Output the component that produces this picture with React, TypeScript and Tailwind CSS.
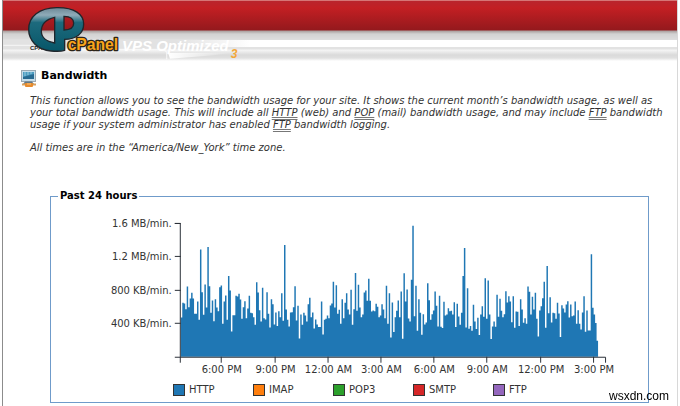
import React from 'react';

interface Series {
  name: string;
  swatch: string;
}

const SERIES: Series[] = [
  { name: 'HTTP', swatch: 'bg-[#1f77b4]' },
  { name: 'IMAP', swatch: 'bg-[#ff7f0e]' },
  { name: 'POP3', swatch: 'bg-[#2ca02c]' },
  { name: 'SMTP', swatch: 'bg-[#d62728]' },
  { name: 'FTP', swatch: 'bg-[#9467bd]' },
];

// One sample per five minutes, in percent of 400 KB/min
const HTTP_SAMPLES = [
  118, 162, 160, 143, 211, 149, 175, 192, 175, 129, 129, 166, 111, 322, 194, 126, 217, 148, 330, 212,
  132, 169, 107, 173, 148, 137, 209, 214, 99, 166, 184, 111, 243, 199, 76, 125, 125, 183, 181, 189,
  172, 114, 149, 167, 116, 145, 183, 132, 131, 119, 96, 224, 193, 140, 106, 207, 116, 112, 194, 129,
  88, 173, 158, 97, 133, 92, 137, 119, 191, 108, 336, 142, 111, 91, 133, 134, 149, 212, 109, 153,
  55, 127, 96, 132, 124, 106, 158, 177, 119, 133, 85, 112, 97, 89, 89, 166, 67, 111, 114, 124,
  116, 154, 160, 225, 148, 215, 129, 141, 99, 173, 116, 162, 191, 142, 127, 201, 96, 143, 252, 138,
  216, 148, 119, 127, 193, 199, 168, 234, 168, 136, 139, 137, 159, 150, 119, 124, 158, 142, 116, 213,
  99, 191, 58, 163, 74, 119, 138, 169, 119, 196, 54, 251, 166, 202, 115, 106, 231, 394, 122, 213,
  78, 173, 132, 66, 128, 97, 103, 221, 170, 111, 128, 139, 196, 153, 91, 183, 90, 86, 165, 124,
  127, 146, 137, 138, 127, 164, 89, 159, 121, 96, 132, 243, 327, 88, 206, 84, 92, 78, 156, 106,
  83, 117, 65, 127, 152, 120, 236, 114, 229, 127, 53, 91, 106, 90, 186, 120, 174, 138, 119, 128,
  197, 163, 182, 166, 104, 182, 87, 136, 135, 92, 173, 142, 102, 116, 99, 211, 195, 127, 180, 142,
  192, 114, 61, 139, 152, 176, 225, 87, 273, 131, 179, 103, 132, 131, 114, 162, 130, 59, 155, 145,
  133, 157, 167, 118, 157, 122, 124, 166, 99, 140, 99, 82, 133, 182, 75, 139, 79, 79, 308, 147,
  127, 101, 48,
];

const Y_TICKS = [
  { y: 20, label: '1.6 MB/min.' },
  { y: 53, label: '1.2 MB/min.' },
  { y: 87, label: '800 KB/min.' },
  { y: 120, label: '400 KB/min.' },
];

const X_TICKS = [
  { x: 170, label: '6:00 PM' },
  { x: 224, label: '9:00 PM' },
  { x: 277, label: '12:00 AM' },
  { x: 330, label: '3:00 AM' },
  { x: 383, label: '6:00 AM' },
  { x: 436, label: '9:00 AM' },
  { x: 490, label: '12:00 PM' },
  { x: 543, label: '3:00 PM' },
];

const BASE_Y = 153;
const START_X = 130;
const STEP = 1.477;

const areaPath = () => {
  let d = `M${START_X} ${BASE_Y}`;
  HTTP_SAMPLES.forEach((value, i) => {
    const top = (BASE_Y - value / 3).toFixed(2);
    d += `V${top}H${(START_X + (i + 1) * STEP).toFixed(2)}`;
  });
  return `${d}V${BASE_Y}Z`;
};

const BandwidthChart: React.FC = () => (
  <svg
    viewBox="0 0 598 172"
    className="mt-[2px] block w-full text-[10px]"
    role="img"
    aria-label="Bandwidth usage, past 24 hours"
  >
    <path d={areaPath()} fill="#1f77b4" />
    <path d="M124 19.5H129.5V159M124 153.5H555.5V159" fill="none" stroke="#2a3038" />
    {Y_TICKS.map((tick) => (
      <g key={tick.label}>
        <path d={`M124 ${tick.y - 0.5}H130`} stroke="#2a3038" />
        <text x="121" y={tick.y + 3} textAnchor="end" fill="#333">
          {tick.label}
        </text>
      </g>
    ))}
    {X_TICKS.map((tick) => (
      <g key={tick.label}>
        <path d={`M${tick.x + 0.5} 153V159`} stroke="#2a3038" />
        <text x={tick.x + 1} y="169" textAnchor="middle" fill="#333">
          {tick.label}
        </text>
      </g>
    ))}
  </svg>
);

const Logo: React.FC = () => (
  <svg width="250" height="62" viewBox="0 0 750 186" className="block" role="img" aria-label="cPanel VPS Optimized 3">
    <defs>
      <linearGradient id="gloss" x1="0" y1="0" x2="0" y2="1">
        <stop offset="0" stopColor="#6b8795" />
        <stop offset="0.17" stopColor="#8fabb8" />
        <stop offset="0.34" stopColor="#1d6a7d" />
        <stop offset="1" stopColor="#075668" />
      </linearGradient>
      <linearGradient id="tab" x1="0" y1="0" x2="1" y2="0">
        <stop offset="0" stopColor="#fff" />
        <stop offset="1" stopColor="#fff" stopOpacity="0" />
      </linearGradient>
      <linearGradient id="strip" x1="0" y1="0" x2="1" y2="0">
        <stop offset="0" stopColor="#e2e2e2" />
        <stop offset="0.7" stopColor="#e2e2e2" />
        <stop offset="1" stopColor="#e2e2e2" stopOpacity="0" />
      </linearGradient>
    </defs>
    <rect x="9" y="118" width="741" height="26" fill="url(#strip)" />
    <path d="M10 136H90L110 148H490L500 156V178" fill="none" stroke="#fff" strokeWidth="4" opacity="0.6" />
    <path d="M504 159H690L640 166L510 176Z" fill="url(#tab)" />
    <text x="90" y="150" fontSize="18" fontWeight="bold" fontFamily="Liberation Sans, sans-serif" fill="#222">
      CPANEL
    </text>
    <path
      fillRule="evenodd"
      d="M170 23C224 22 251 43 251 72C251 101 228 117 194 118V151C182 155 165 154 153 153C112 149 86 122 86 88C86 49 118 24 170 23ZM164 52C138 58 124 74 124 94C124 112 140 125 164 129ZM192 49V90C211 90 221 84 221 70C221 57 211 49 192 49Z"
      fill="url(#gloss)"
      stroke="#20262c"
      strokeWidth="4"
    />
    <text
      x="366"
      y="152"
      fontSize="45"
      fontWeight="bold"
      fontStyle="italic"
      fontFamily="Liberation Sans, sans-serif"
      fill="#fff"
    >
      VPS Optimized
    </text>
    <text
      x="203"
      y="150"
      fontSize="47"
      fontWeight="bold"
      fontFamily="Liberation Sans, sans-serif"
      fill="#f8a51b"
      stroke="#2b2418"
      strokeWidth="8"
      strokeLinejoin="round"
      paintOrder="stroke"
    >
      cPanel
    </text>
    <text x="692" y="175" fontSize="36" fontWeight="bold" fontStyle="italic" fontFamily="Liberation Sans, sans-serif" fill="#f3a83a">
      3
    </text>
  </svg>
);

const BandwidthIcon: React.FC = () => (
  <svg width="16" height="18" viewBox="0 0 16 18" aria-hidden="true">
    <rect x="0.5" y="0.5" width="14" height="11" fill="#c5ddea" stroke="#9aa9b3" />
    <rect x="2" y="2" width="11" height="7" fill="#276a91" />
    <path d="M2 2H13V4L2 7Z" fill="#4b9bc0" />
    <path d="M4 2V6M7 2V5M10 2V4" stroke="#98cade" />
    <path d="M4 11.500H11L13 14H2Z" fill="#607887" />
    <path d="M1 14.500H15" stroke="#d9a05c" strokeWidth="2" />
    <rect x="4" y="13" width="8" height="4" rx="1" fill="#e78b2d" />
    <path d="M6 14H10" stroke="#f8c47d" />
  </svg>
);

const Term: React.FC<{ title: string; children: string }> = ({ title, children }) => (
  <abbr title={title} className="underline decoration-[#777] decoration-double">
    {children}
  </abbr>
);

const App: React.FC = () => (
  <div className="bg-white font-['DejaVu_Sans',sans-serif] text-[10px] leading-3 text-[#333]">
    <div className="mr-[2px] ml-[2px] min-h-screen border-x border-r-[#d8d8d8] border-l-[#8c8c8c]">
      <header className="h-[62px] bg-[linear-gradient(#d67575_0px,#d67575_1px,#b9252d_1px,#c31f23_8px,#94191d_30px,#aaa09e_31px,#d2d2d2_34px,#dedede_40px,#ffffff_40px,#ffffff_47px,#e2e2e2_47px,#e2e2e2_49px,#f5f5f5_50px,#dadada_55px,#e0e0e0_58px,#ffffff_61px)]">
        <div className="-ml-[3px]">
          <Logo />
        </div>
      </header>

      <main className="pt-2 pl-[18px]">
        <div className="flex gap-1">
          <BandwidthIcon />
          <h1 className="text-[11px] font-bold text-black">Bandwidth</h1>
        </div>

        <div className="mt-[7px] mr-2 ml-[9px] italic">
          <p>
            This function allows you to see the bandwidth usage for your site. It shows the current month’s bandwidth
            usage, as well as your total bandwidth usage. This will include all{' '}
            <Term title="HyperText Transfer Protocol">HTTP</Term> (web) and{' '}
            <Term title="Post Office Protocol">POP</Term> (mail) bandwidth usage, and may include{' '}
            <Term title="File Transfer Protocol">FTP</Term> bandwidth usage if your system administrator has enabled{' '}
            <Term title="File Transfer Protocol">FTP</Term> bandwidth logging.
          </p>
          <p className="mt-[11px]">All times are in the “America/New_York” time zone.</p>
        </div>

        {/* Past 24 hours */}
        <fieldset className="mt-9 mr-7 ml-[29px] border border-[#6f9bca] pb-[6px]">
          <legend className="ml-[7px] px-[2px] font-bold text-black">Past 24 hours</legend>
          <BandwidthChart />
          <ul className="mt-2 ml-[122px] flex">
            {SERIES.map((item) => (
              <li key={item.name} className="flex w-[80px] items-center gap-1">
                <span className={`h-3 w-3 border border-[#333] ${item.swatch}`} />
                {item.name}
              </li>
            ))}
          </ul>
        </fieldset>
      </main>
    </div>
    <div className="fixed right-[11px] bottom-[2px] font-['Liberation_Sans',sans-serif] text-[12px] leading-4 text-black">
      wsxdn.com
    </div>
  </div>
);

export default App;
